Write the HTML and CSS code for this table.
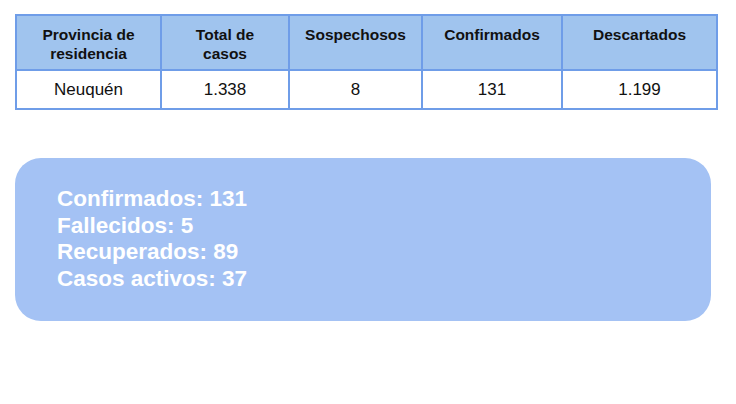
FILE: index.html
```html
<!DOCTYPE html>
<html lang="es">
<head>
<meta charset="utf-8">
<link rel="stylesheet" href="styles.css">
</head>
<body>
<div class="page">
  <table class="casos">
    <colgroup>
      <col class="c1"><col class="c2"><col class="c3"><col class="c4"><col class="c5">
    </colgroup>
    <thead>
      <tr>
        <th>Provincia de<br>residencia</th>
        <th>Total de<br>casos</th>
        <th>Sospechosos</th>
        <th>Confirmados</th>
        <th>Descartados</th>
      </tr>
    </thead>
    <tbody>
      <tr>
        <td>Neuquén</td>
        <td>1.338</td>
        <td>8</td>
        <td>131</td>
        <td>1.199</td>
      </tr>
    </tbody>
  </table>
  <div class="resumen">
    <p>Confirmados: 131</p>
    <p>Fallecidos: 5</p>
    <p>Recuperados: 89</p>
    <p>Casos activos: 37</p>
  </div>
</div>
</body>
</html>
```
FILE: styles.css
```css
html, body {
  margin: 0;
  padding: 0;
  background: #ffffff;
}
.page {
  padding: 14px 0 0 15px;
  font-family: "Liberation Sans", Arial, sans-serif;
  color: #111;
}
.casos {
  border-collapse: collapse;
  width: 701px;
  table-layout: fixed;
  border: 2px solid #6f9de8;
}
.c1 { width: 145px; }
.c2 { width: 128px; }
.c3 { width: 133px; }
.c4 { width: 140px; }
.c5 { width: 155px; }
.casos th, .casos td {
  border: 2px solid #6f9de8;
  text-align: center;
  padding: 0;
}
.casos th {
  background: #a0c4ee;
  font-size: 15.5px;
  font-weight: bold;
  line-height: 19px;
  vertical-align: top;
  padding-top: 9px;
  height: 44px;
}
.casos td {
  font-size: 17px;
  height: 37px;
  vertical-align: middle;
}
.resumen {
  margin-top: 48px;
  width: 654px;
  height: 135px;
  padding: 28px 0 0 42px;
  background: #a4c2f4;
  border-radius: 26px;
  color: #ffffff;
  font-weight: bold;
  font-size: 22.5px;
  line-height: 26.7px;
}
.resumen p {
  margin: 0;
}
```
